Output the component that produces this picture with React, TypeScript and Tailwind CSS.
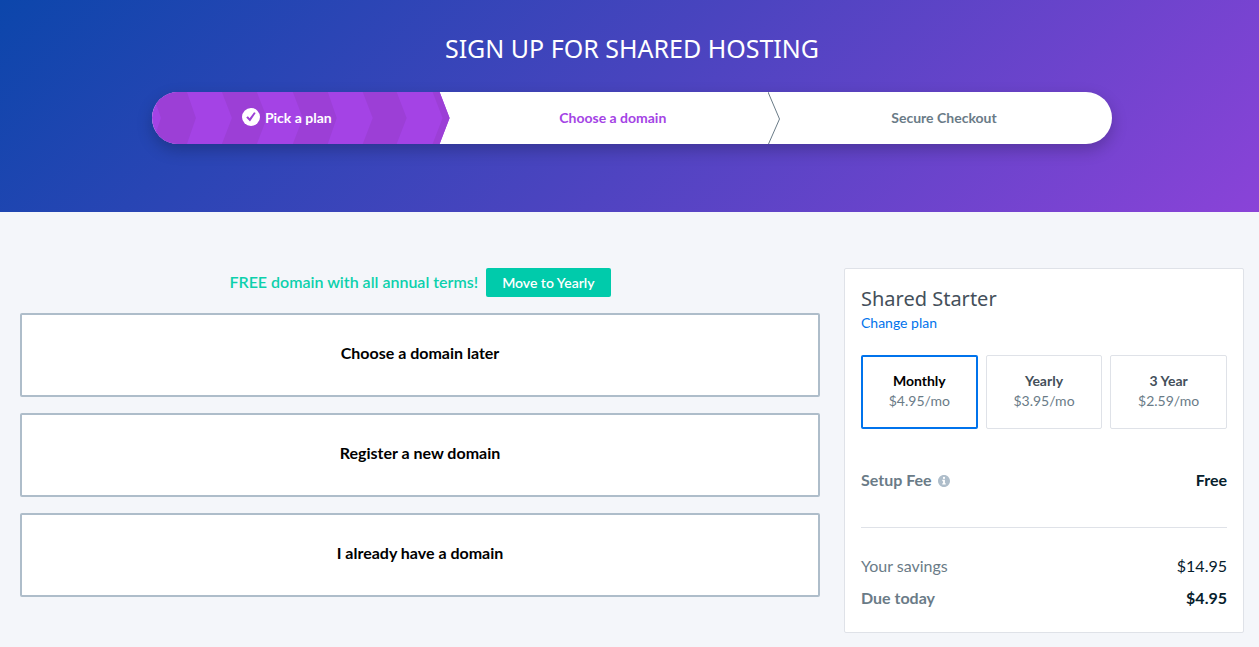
import { useState } from "react";

const domainOptions = ["Choose a domain later", "Register a new domain", "I already have a domain"];

const terms = [
  { name: "Monthly", price: "$4.95/mo" },
  { name: "Yearly", price: "$3.95/mo" },
  { name: "3 Year", price: "$2.59/mo" },
];

function CheckIcon() {
  return (
    <svg className="size-[18px] shrink-0" viewBox="0 0 18 18" aria-hidden="true">
      <circle cx="9" cy="9" r="9" fill="#fff" />
      <path d="M4.2 9.6 5.9 8.2 7.6 10.3 12.1 4.2 13.7 5 8 13.6Z" fill="#9c3fd6" />
    </svg>
  );
}

function InfoIcon() {
  return (
    <svg className="mt-px size-3" viewBox="8 8 496 496" aria-hidden="true">
      <path
        fill="#aebdca"
        d="M256 8C119 8 8 119 8 256s111 248 248 248 248-111 248-248S393 8 256 8zm0 75a46 46 0 1 1 0 92 46 46 0 0 1 0-92zm72 309c0 7-5 12-12 12H196c-7 0-12-5-12-12v-34c0-7 5-12 12-12h22v-84h-22c-7 0-12-5-12-12v-32c0-7 5-12 12-12h86c7 0 12 5 12 12v128h22c7 0 12 5 12 12z"
      />
    </svg>
  );
}

function StepRibbon() {
  return (
    <svg className="absolute inset-0 size-full" viewBox="0 0 298 52" preserveAspectRatio="none" aria-hidden="true">
      <path d="M0 0H288L298 26 288 52H0Z" fill="#a443e5" />
      <g fill="#9c3fd6">
        <path d="M0 0H35L44 26 35 52H0L9 26Z" />
        <path d="M70 0H105L115 26 105 52H70L80 26Z" />
        <path d="M141 0H176L185 26 176 52H141L151 26Z" />
        <path d="M211 0H245L255 26 245 52H211L221 26Z" />
        <path d="M281 0H288L298 26 288 52H281L291 26Z" />
      </g>
    </svg>
  );
}

function Steps() {
  return (
    <ol className="mx-auto mt-7 grid h-[52px] max-w-[960px] grid-cols-[31fr_34fr_35fr] overflow-hidden rounded-full bg-white text-[14px] font-bold shadow-[0_6px_16px_rgba(0,0,0,0.22)]">
      <li className="relative">
        <StepRibbon />
        <div className="relative flex h-full items-center justify-center gap-[5px] pr-7 pb-0.5 text-white">
          <CheckIcon />
          Pick a plan
        </div>
      </li>
      <li className="flex items-center justify-center pb-0.5 text-[#a443e5]">Choose a domain</li>
      <li className="relative flex items-center justify-center pb-0.5 text-[#6a7b87]">
        <svg className="absolute top-0 -left-2 h-full w-3" viewBox="0 0 12 52" fill="none" aria-hidden="true">
          <path d="M0 0 11.5 27 0.5 52" stroke="#6a7b87" />
        </svg>
        Secure Checkout
      </li>
    </ol>
  );
}

function Summary() {
  const [term, setTerm] = useState("Monthly");
  return (
    <aside className="w-[400px] shrink-0 rounded-xs border border-[#dfe2e8] bg-white px-4 pt-[18px] pb-[18px]">
      <h2 className="font-['Noto_Sans',sans-serif] text-[20px] leading-6 text-[#444f5a]">Shared Starter</h2>
      <a href="#plans" className="block text-[14px] leading-6 text-[#0073ec]">
        Change plan
      </a>
      <div className="mt-5 grid grid-cols-3 gap-2">
        {terms.map((t) => (
          <button
            key={t.name}
            type="button"
            aria-pressed={t.name === term}
            onClick={() => setTerm(t.name)}
            className={
              t.name === term
                ? "h-[74px] rounded-xs border-2 border-[#0073ec] pb-0.5 text-[14px] leading-5 text-black"
                : "h-[74px] rounded-xs border border-[#dfe2e8] pb-0.5 text-[14px] leading-5 text-[#444f5a]"
            }
          >
            <span className="block font-bold">{t.name}</span>
            <span className="block text-[#6a7b87]">{t.price}</span>
          </button>
        ))}
      </div>
      <dl className="mt-[35px] text-[16px] leading-8 text-[#06202c]">
        <div className="flex justify-between border-b border-[#dfe2e8] pb-[31px]">
          <dt className="flex items-center gap-1.5 font-bold text-[#6a7b87]">
            Setup Fee <InfoIcon />
          </dt>
          <dd className="font-bold">Free</dd>
        </div>
        <div className="mt-[22px] flex justify-between">
          <dt className="text-[#6a7b87]">Your savings</dt>
          <dd>$14.95</dd>
        </div>
        <div className="flex justify-between font-bold">
          <dt className="text-[#6a7b87]">Due today</dt>
          <dd>$4.95</dd>
        </div>
      </dl>
    </aside>
  );
}

export default function App() {
  return (
    <div className="min-h-screen bg-[#f4f6fa] font-['Lato',sans-serif]">
      <header className="bg-linear-[135deg,#0c46ab,#4a44bf_50%,#8a43d8] pt-8 pr-[15px] pb-[68px] pl-5">
        <h1 className="text-center font-['Noto_Sans',sans-serif] text-[25px] leading-8 text-white">
          SIGN UP FOR SHARED HOSTING
        </h1>
        <Steps />
      </header>
      <main className="flex items-start gap-6 pt-14 pr-[15px] pb-3 pl-5">
        <section className="flex-1">
          <div className="flex items-center justify-center gap-2">
            <p className="pb-0.5 text-[16px] font-semibold text-[#0cd0ac]">FREE domain with all annual terms!</p>
            <button
              type="button"
              className="h-[29px] rounded-xs bg-[#00cbab] px-4 text-[14px] font-semibold text-white"
            >
              Move to Yearly
            </button>
          </div>
          <div className="mt-4 grid gap-4">
            {domainOptions.map((label) => (
              <button
                key={label}
                type="button"
                className="h-[84px] rounded-xs border-2 border-[#aebdca] bg-white pb-1 text-[16px] font-bold text-black"
              >
                {label}
              </button>
            ))}
          </div>
        </section>
        <Summary />
      </main>
    </div>
  );
}
